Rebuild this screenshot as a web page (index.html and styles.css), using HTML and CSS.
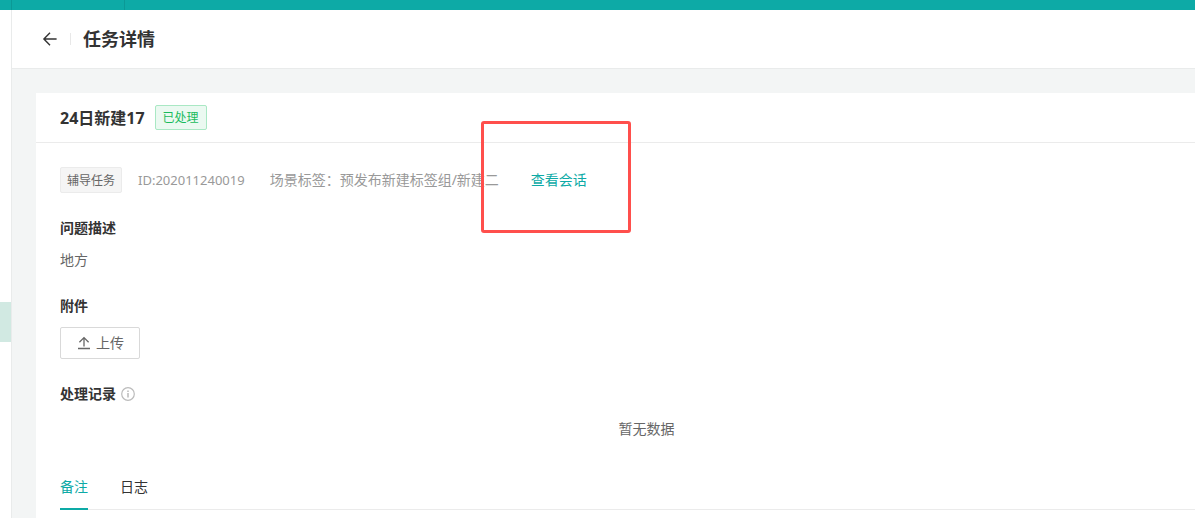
FILE: index.html
```html
<!DOCTYPE html>
<html lang="zh-CN">
<head>
<meta charset="utf-8">
<meta name="viewport" content="width=device-width, initial-scale=1">
<title>任务详情</title>
<link rel="stylesheet" href="styles.css">
</head>
<body>
<div class="app">
  <div class="topbar"><span class="topbar-brand"></span></div>
  <div class="layout">
    <nav class="sidebar" aria-label="导航"><span class="sidebar-active"></span></nav>
    <main class="main">
      <header class="page-header">
        <button class="back" type="button" aria-label="返回">
          <svg width="16" height="16" viewBox="0 0 16 16" fill="none" stroke="currentColor" stroke-width="1.4"><path d="M14.6 8H2M8 1.7 1.9 8 8 14.3"/></svg>
        </button>
        <span class="divider"></span>
        <h1 class="page-title">任务详情</h1>
      </header>
      <section class="card">
        <div class="card-header">
          <h2 class="card-title">24日新建17</h2>
          <span class="status">已处理</span>
        </div>
        <div class="card-body">
          <div class="meta">
            <span class="tag">辅导任务</span>
            <span class="task-id">ID:202011240019</span>
            <span class="scene">场景标签：预发布新建标签组/新建二</span>
            <span class="link-wrap"><a class="link" href="#">查看会话</a><span class="highlight"></span></span>
          </div>
          <h3 class="label">问题描述</h3>
          <p class="description">地方</p>
          <h3 class="label">附件</h3>
          <button class="upload" type="button">
            <svg width="14" height="14" viewBox="0 0 14 14" fill="none" stroke="currentColor" stroke-width="1.3"><path d="M7 10.5V2M2.4 6.2 7 1.6l4.6 4.6M1 12.5h12"/></svg>
            <span>上传</span>
          </button>
          <h3 class="label label-info">处理记录
            <svg class="info" width="14" height="14" viewBox="0 0 14 14" fill="none" stroke="currentColor" stroke-width="1.2"><circle cx="7" cy="7" r="6.3"/><path d="M7 6v4.4M7 3.5v1.4" stroke-width="1.5"/></svg>
          </h3>
          <p class="empty">暂无数据</p>
          <div class="tabs" role="tablist">
            <button class="tab tab-active" type="button" role="tab" aria-selected="true">备注</button>
            <button class="tab" type="button" role="tab" aria-selected="false">日志</button>
          </div>
        </div>
      </section>
    </main>
  </div>
</div>
</body>
</html>
```
FILE: styles.css
```css
* { box-sizing: border-box; }

body {
  margin: 0;
  background: #fff;
  color: #666;
  font: 14px/22px "Noto Sans", "Noto Sans CJK SC", sans-serif;
}

h1, h2, h3, p { margin: 0; }

button {
  padding: 0;
  border: 0;
  background: none;
  color: inherit;
  font: inherit;
}

svg { display: block; flex: none; }

.app {
  display: flex;
  flex-direction: column;
  height: 100vh;
  overflow: hidden;
}

.topbar {
  flex: none;
  height: 10px;
  padding-left: 11px;
  background: #0daaa6;
}

.topbar-brand {
  display: block;
  width: 114px;
  height: 100%;
  border: solid #0b9996;
  border-width: 0 1px;
}

.layout {
  display: flex;
  flex: 1;
  min-height: 0;
}

.sidebar {
  flex: none;
  width: 12px;
  padding-top: 292px;
  border-right: 1px solid #e9ebeb;
}

.sidebar-active {
  display: block;
  height: 40px;
  background: #d1e9e2;
}

.main {
  flex: 1;
  min-width: 0;
  overflow: hidden;
  background: #f3f5f5;
}

.page-header {
  display: flex;
  align-items: center;
  height: 59px;
  padding-left: 30px;
  border-bottom: 1px solid #e9ebeb;
  background: #fff;
}

.back { color: #333; }

.divider {
  width: 1px;
  height: 12px;
  margin: 0 12px;
  background: #e8e8e8;
}

.page-title {
  color: #333;
  font-size: 18px;
  line-height: 28px;
}

/* The card runs past the right edge of the visible area. */
.card {
  margin: 24px -62px 0 24px;
  background: #fff;
}

.card-header {
  display: flex;
  align-items: center;
  gap: 10px;
  height: 50px;
  padding: 0 24px;
  border-bottom: 1px solid #ebebeb;
}

.card-title {
  color: #333;
  font-size: 16px;
  line-height: 24px;
}

.status {
  padding: 1px 7px 0;
  border: 1px solid #a9e8c4;
  border-radius: 2px;
  background: #ebf9f1;
  color: #1abb5c;
  font-size: 12px;
}

.card-body { padding: 24px; }

.meta {
  display: flex;
  align-items: center;
  margin-bottom: 24px;
  color: #999;
}

.tag {
  padding: 2px 6px 0;
  border: 1px solid #ebebeb;
  border-radius: 2px;
  background: #f5f5f5;
  color: #666;
  font-size: 12px;
}

.task-id {
  margin: 0 25px 0 16px;
  font-size: 13px;
}

.link-wrap {
  position: relative;
  margin-left: 32px;
}

.link {
  color: #0daaa6;
  text-decoration: none;
}

.highlight {
  position: absolute;
  top: -48px;
  left: -50px;
  width: 150px;
  height: 112px;
  border: 3px solid #ff4f4c;
  border-radius: 3px;
  pointer-events: none;
}

.label {
  color: #333;
  font-size: 14px;
  line-height: 22px;
}

.description { margin: 10px 0 24px; }

.upload {
  display: flex;
  align-items: center;
  gap: 5px;
  height: 32px;
  margin: 10px 0 24px;
  padding: 0 15px 0 16px;
  border: 1px solid #d9d9d9;
  border-radius: 2px;
}

.label-info {
  display: flex;
  align-items: center;
  gap: 5px;
}

.info { color: #bbb; }

.empty {
  margin: 13px 0 28px;
  text-align: center;
}

.tabs {
  display: flex;
  gap: 32px;
  border-bottom: 1px solid #ebebeb;
}

.tab {
  margin-bottom: -1px;
  padding: 8px 0 10px;
  border-bottom: 2px solid transparent;
  color: #333;
}

.tab-active {
  border-color: #0daaa6;
  color: #0daaa6;
}
```
